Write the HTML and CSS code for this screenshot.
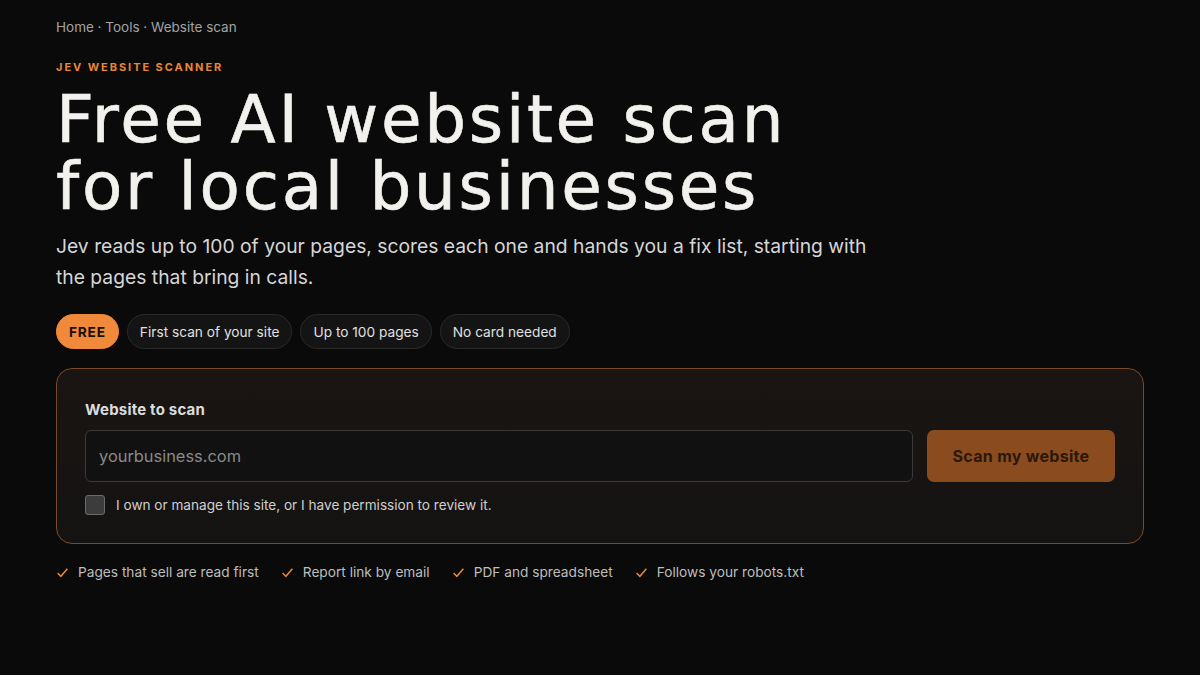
FILE: index.html
```html
<!DOCTYPE html>
<html lang="en">
<head>
<meta charset="utf-8">
<title>Free AI website scan</title>
<link rel="stylesheet" href="styles.css">
</head>
<body>
<main class="page">
  <nav class="crumbs">Home · Tools · Website scan</nav>
  <div class="eyebrow">JEV WEBSITE SCANNER</div>
  <h1 class="title"><span class="tline">Free AI website scan</span><span class="tline">for local businesses</span></h1>
  <p class="lead">Jev reads up to 100 of your pages, scores each one and hands you a fix list, starting with the pages that bring in calls.</p>
  <div class="pills">
    <span class="pill pill-free">FREE</span>
    <span class="pill">First scan of your site</span>
    <span class="pill">Up to 100 pages</span>
    <span class="pill">No card needed</span>
  </div>
  <form class="card">
    <label class="field-label">Website to scan</label>
    <div class="row">
      <div class="input">yourbusiness.com</div>
      <button type="button" class="btn">Scan my website</button>
    </div>
    <div class="consent">
      <span class="box"></span>
      <span>I own or manage this site, or I have permission to review it.</span>
    </div>
  </form>
  <ul class="checks">
    <li><svg viewBox="0 0 12 12" class="tick"><path d="M1.5 6.5 L4.5 9.5 L10.5 2.5"/></svg>Pages that sell are read first</li>
    <li><svg viewBox="0 0 12 12" class="tick"><path d="M1.5 6.5 L4.5 9.5 L10.5 2.5"/></svg>Report link by email</li>
    <li><svg viewBox="0 0 12 12" class="tick"><path d="M1.5 6.5 L4.5 9.5 L10.5 2.5"/></svg>PDF and spreadsheet</li>
    <li><svg viewBox="0 0 12 12" class="tick"><path d="M1.5 6.5 L4.5 9.5 L10.5 2.5"/></svg>Follows your robots.txt</li>
  </ul>
</main>
</body>
</html>
```
FILE: styles.css
```css
* { box-sizing: border-box; }
html, body { margin: 0; padding: 0; background: #0a0a0a; }
body { font-family: Inter, "Noto Sans", sans-serif; color: #eee; }
.page { padding: 18px 56px 0 56px; width: 1200px; }
.crumbs { font-size: 13.5px; color: #a3a3a3; line-height: 18px; }
.eyebrow { margin-top: 24px; font-size: 11px; font-weight: 700; letter-spacing: 1.95px; color: #e8863a; line-height: 14px; }
.title { margin: 12px 0 0 0; font-family: "DejaVu Sans", sans-serif; font-weight: 400; font-size: 66px; line-height: 67px; letter-spacing: 2.7px; color: #f2f1ee; -webkit-text-stroke: 0.6px #f2f1ee; }
.tline { display: block; height: 67px; }
.lead { margin: 11px 0 0 0; font-size: 19.3px; line-height: 31px; color: #d6d6d6; max-width: 840px; }
.pills { display: flex; gap: 8px; margin-top: 21px; }
.pill { height: 35px; display: inline-flex; align-items: center; padding: 0 12px; border-radius: 18px; background: #141414; border: 1px solid #2a2a2a; font-size: 13.7px; color: #e0e0e0; }
.pill-free { background: #f08a3a; border-color: #f08a3a; color: #1a1008; font-weight: 700; letter-spacing: 0.8px; padding: 0 12px; }
.card { margin-top: 19px; border: 1px solid #7b4a25; border-radius: 16px; background: linear-gradient(180deg, #1a1512 0%, #141312 100%); padding: 32px 28px 28px 28px; display: flex; flex-direction: column; }
.field-label { font-size: 15px; font-weight: 700; color: #dcdcdc; line-height: 18px; letter-spacing: 0.2px; }
.row { display: flex; gap: 14px; margin-top: 11px; }
.input { flex: 1; height: 52px; border: 1px solid #3a3a3a; border-radius: 6px; background: #111; display: flex; align-items: center; padding: 0 13px; font-size: 16.4px; color: #8a8a8a; }
.btn { width: 188px; height: 52px; border: none; border-radius: 7px; background: #8a4c1e; color: #2a180b; font-family: Inter, sans-serif; font-size: 16px; font-weight: 700; letter-spacing: 0.3px; }
.consent { display: flex; align-items: center; gap: 11px; margin-top: 13px; font-size: 13.6px; color: #cfcfcf; }
.box { width: 20px; height: 20px; border-radius: 3px; background: #3c3c3c; border: 1px solid #6a6a6a; flex: none; }
.checks { list-style: none; margin: 20px 0 0 0; padding: 0; display: flex; gap: 22px; font-size: 13.7px; color: #bdbdbd; }
.checks li { display: flex; align-items: center; gap: 9px; }
.tick { width: 13px; height: 13px; fill: none; stroke: #e8863a; stroke-width: 1.4; }
```
